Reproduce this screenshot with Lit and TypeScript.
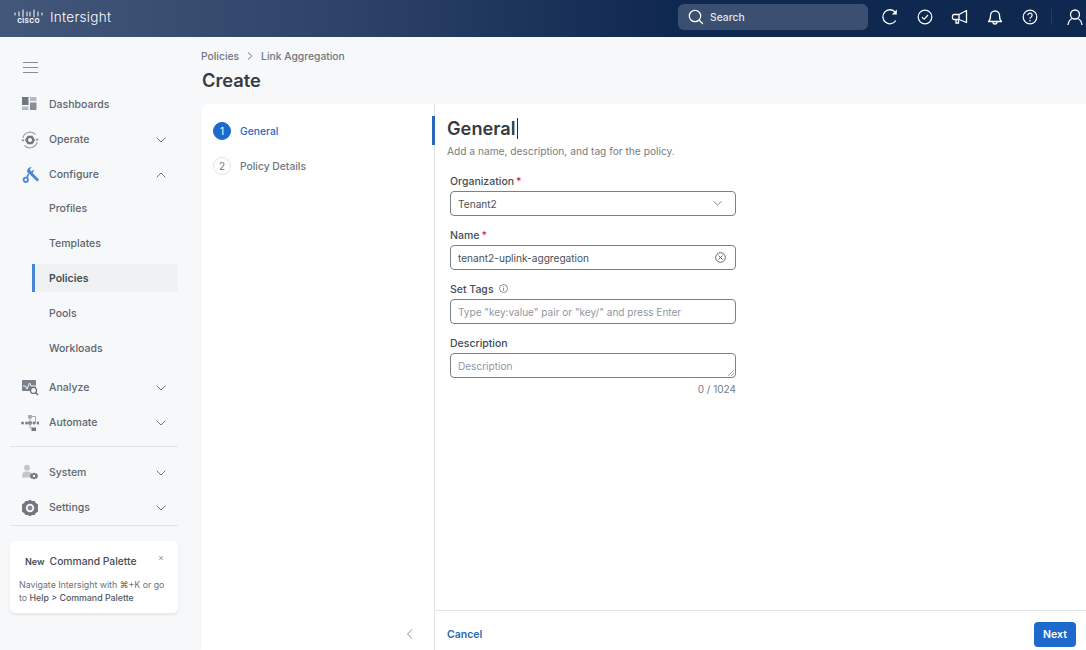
import { LitElement, html, css, svg } from "lit";
import { customElement } from "lit/decorators.js";

const chevDown = html`<svg class="chev" width="10" height="6" viewBox="0 0 10 6"><path d="M.7.7 5 5 9.300.7" fill="none" stroke="#6f7780" stroke-width="1"/></svg>`;
const chevUp = html`<svg class="chev" width="10" height="6" viewBox="0 0 10 6"><path d="M.7 5.300 5 1l4.300 4.300" fill="none" stroke="#6f7780" stroke-width="1"/></svg>`;

const gray = "#79818a";
const gearTeeth = "M9 .8 11.200 2.100 13.600 2 14.800 4.100 17 5.300 16.900 9 17 12.700 14.800 13.900 13.600 16 11.200 15.900 9 17.200 6.800 15.900 4.400 16 3.200 13.900 1 12.700 1.100 9 1 5.300 3.200 4.100 4.400 2 6.800 2.100z";
const icons: Record<string, unknown> = {
  dash: svg`<rect x="1" y="1" width="6.500" height="8" fill="#6f7780"/><rect x="9" y="1" width="6.500" height="4" fill="#b5babf"/><rect x="1" y="10.500" width="6.500" height="3.500" fill="#b5babf"/><rect x="9" y="6.500" width="6.500" height="7.500" fill="#868d95"/>`,
  operate: svg`<path d="M1.800 7A7.500 7.500 0 0 1 14.500 3.500M16.200 11A7.500 7.500 0 0 1 3.500 14.500" fill="none" stroke="#9aa0a6" stroke-width="1.100"/><path d="M.3 8.500h3.400L2 11zM17.700 9.500h-3.400L16 7z" fill="#8a9198"/><path d="M6.500 4.700h5L14 9l-2.500 4.300h-5L4 9z" fill="#6f7780"/><circle cx="9" cy="9" r="2" fill="#f7f8f9"/>`,
  config: svg`<path d="M9.500 7 16.300 13.800" fill="none" stroke="#4a86d8" stroke-width="2.800" stroke-linecap="round"/><path d="M6.200 6.200A4 4 0 0 1 10.800 1.300L8.700 3.400 10.600 5.400 12.800 3.300A4 4 0 0 1 8 8z" fill="#4a86d8"/><path d="M7.500 8 5.800 12" stroke="#4a86d8" stroke-width="1.700"/><circle cx="4.800" cy="13.800" r="2.200" fill="none" stroke="#4a86d8" stroke-width="1.800"/>`,
  analyze: svg`<rect x="1" y="1" width="14" height="11" rx="1" fill="#79818a"/><path d="M2 7h2.500l1.500 3 2.500-6 1.500 3H15" fill="none" stroke="#f7f8f9" stroke-width="1"/><circle cx="12.500" cy="11.500" r="3" fill="#f7f8f9" stroke="#5e666e" stroke-width="1.100"/><path d="M14.700 13.700 17 16" stroke="#5e666e" stroke-width="1.300"/>`,
  automate: svg`<circle cx="1.500" cy="9" r="1.500" fill="${gray}"/><circle cx="5.500" cy="9" r="1.500" fill="${gray}"/><circle cx="9" cy="9" r="2" fill="#6f7780"/><circle cx="13" cy="9" r="1.500" fill="${gray}"/><circle cx="17" cy="9" r="1.500" fill="${gray}"/><rect x="7" y="1" width="4" height="3.500" fill="#a6acb2"/><rect x="10.500" y="13.500" width="4.500" height="3.500" fill="#6f7780"/><path d="M9 4v10h2M11 2.500h3.500V9" fill="none" stroke="#a6acb2"/>`,
  system: svg`<circle cx="6" cy="3.800" r="3" fill="#c3c7cb"/><path d="M1 13.500c0-5 1.500-6 5-6s5 1 5 6z" fill="#c3c7cb"/><path d="M13 8.600l1.400.8 1.600.1.700 1.400v2.200l-.7 1.400-1.600.1-1.400.8-1.400-.8-1.600-.1-.7-1.400v-2.200l.7-1.400 1.600-.1z" fill="#6f7780"/><circle cx="13" cy="12" r="1.200" fill="#f7f8f9"/>`,
  settings: svg`<path d="${gearTeeth}" fill="#6f7780"/><circle cx="9" cy="9" r="4.200" fill="#f7f8f9"/><circle cx="9" cy="9" r="2.400" fill="#868d95"/>`,
};

function navIcon(name: string) {
  return html`<svg class="nav-icon" width="18" height="18" viewBox="0 0 18 18">${icons[name]}</svg>`;
}

@customElement("app-root")
export class AppRoot extends LitElement {
  static styles = css`
    :host {
      display: flex;
      flex-direction: column;
      height: 650px;
      overflow: hidden;
      background: #f7f8f9;
      font-family: Inter, "Liberation Sans", sans-serif;
      color: #5e666e;
      font-size: 11px;
    }
    header {
      height: 37px;
      box-sizing: border-box;
      padding: 0 0 3px 14px;
      flex: none;
      display: flex;
      align-items: center;
      background: linear-gradient(90deg, #42577a 0%, #2f4468 30%, #0f2850 62%, #0f2850 100%);
      color: #fff;
    }
    .brand {
      font-size: 13.500px;
      font-weight: 300;
      margin-left: 7px;
      letter-spacing: .3px;
    }
    .logo { display: flex; flex-direction: column; align-items: center; width: 29px; }
    .logo b { font-size: 6.500px; font-weight: 700; letter-spacing: .4px; line-height: 7px; }
    .search {
      margin-left: auto;
      width: 190px;
      height: 26px;
      box-sizing: border-box;
      border-radius: 6px;
      background: #3b4f70;
      display: flex;
      align-items: center;
      gap: 6px;
      padding-left: 10px;
      font-size: 10.300px;
      font-weight: 500;
      color: #e3e7ec;
    }
    .tools { display: flex; align-items: center; margin-left: 13px; gap: 17px; padding-right: 2px; }
    .tools svg { display: block; }
    .sep { width: 1px; height: 16px; background: #263d63; margin: 0 -3px 0 -5px; }

    .body { flex: 1; display: flex; min-height: 0; }
    nav { width: 201px; flex: none; box-sizing: border-box; padding: 0 23px 0 10px; }
    .burger { display: block; margin: 25px 0 14px 13px; }
    .item {
      display: flex;
      align-items: center;
      height: 35px;
      font-weight: 500;
      font-size: 10.500px;
      position: relative;
    }
    .item .nav-icon { position: absolute; left: 11px; top: 9px; }
    .item span { margin-left: 39px; }
    .chev { position: absolute; left: 146px; top: 15px; }
    .first-sub { margin-top: -1px; }
    .active { height: 28px; margin: 3px 0 4px 22px; background: #f0f1f3; border-radius: 0 3px 3px 0; border-left: 3px solid #4a86d8; color: #454c53; font-weight: 600; }
    .active span { margin-left: 14px; }
    .group-gap { height: 4px; }
    hr { border: 0; border-top: 1px solid #e1e4e7; margin: 6px 0 8px; }
    .promo {
      margin-top: 15px;
      height: 72px;
      box-sizing: border-box;
      background: #fff;
      border-radius: 5px;
      box-shadow: 0 2px 3px rgba(0, 0, 0, .08);
      padding: 14px 9px 0;
      position: relative;
      font-size: 8.800px;
      line-height: 13px;
      color: #6b7279;
    }
    .promo-title { display: flex; gap: 5px; padding-left: 6px; font-size: 10.300px; font-weight: 500; color: #464d54; margin-bottom: 10px; }
    .promo-title b { font-weight: 600; font-size: 9px; }
    .promo strong { font-weight: 500; color: #50575e; }
    .promo .x { position: absolute; right: 14px; top: 11px; font-size: 9px; color: #8d949b; line-height: 11px; }

    main { flex: 1; display: flex; flex-direction: column; min-width: 0; }
    .crumb { display: flex; align-items: center; gap: 8px; margin-top: 12px; height: 13px; font-size: 10.300px; font-weight: 500; color: #6f7780; }
    h1 { margin: 6px 0 0 1px; height: 24px; line-height: 24px; font-size: 18.300px; font-weight: 600; color: #363b41; }
    .card { flex: 1; display: flex; margin-top: 12px; background: #fff; border-radius: 8px 0 0 0; box-shadow: 0 0 2px rgba(0, 0, 0, .04); min-height: 0; }
    .steps { width: 234px; flex: none; box-sizing: border-box; border-right: 1px solid #e1e4e7; padding-top: 9px; position: relative; }
    .step { display: flex; align-items: center; gap: 9px; height: 35px; padding-left: 12px; font-size: 10.300px; font-weight: 500; color: #6f7780; }
    .dot { width: 18px; height: 18px; box-sizing: border-box; border-radius: 50%; display: flex; align-items: center; justify-content: center; font-size: 10px; border: 1.500px solid #e1e4e7; font-weight: 400; }
    .on { color: #1d69cc; }
    .on .dot { background: #1d69cc; border-color: #1d69cc; color: #fff; }
    .steps .mark { position: absolute; right: -1px; top: 12px; width: 3px; height: 29px; background: #2a67b8; }
    .steps .back { position: absolute; right: 21px; bottom: 11px; }
    .pane { flex: 1; display: flex; flex-direction: column; min-width: 0; }
    .form { flex: 1; padding: 13px 0 0 12px; }
    h2 { margin: 0; height: 22px; line-height: 22px; font-size: 18.200px; font-weight: 600; color: #363b41; display: flex; align-items: center; }
    .caret { width: 1px; height: 21px; background: #2b2f34; margin-left: 1px; }
    .sub { margin-top: 5px; height: 14px; line-height: 14px; font-size: 10.200px; color: #767d85; }
    .fields { width: 286px; margin: 14px 0 0 3px; }
    label { display: flex; align-items: center; height: 19px; font-size: 10.500px; font-weight: 500; color: #464d54; }
    label i { color: #c9303a; font-style: normal; margin-left: 2px; }
    label svg { margin-left: 5px; margin-bottom: 3px; }
    .input {
      height: 25px;
      box-sizing: border-box;
      border: 1.500px solid #7a8288;
      border-radius: 4px;
      display: flex;
      align-items: center;
      justify-content: space-between;
      padding: 0 9px 0 7px;
      font-size: 10.150px;
      color: #4a5157;
      margin-bottom: 10px;
      position: relative;
    }
    .ph { color: #90979e; font-size: 10.050px; }
    .grip { position: absolute; right: 1px; bottom: 1px; }
    .count { margin-top: -5px; text-align: right; font-size: 10px; color: #767d85; }
    footer { height: 40px; box-sizing: border-box; flex: none; border-top: 1px solid #e1e4e7; display: flex; align-items: center; justify-content: space-between; padding: 0 10px 0 12px; font-size: 10.500px; font-weight: 600; color: #2a67b8; }
    .next { width: 42px; height: 25px; margin-top: 8px; border-radius: 4px; background: #1d69cc; color: #fff; display: flex; align-items: center; justify-content: center; }
    .cancel { margin-top: 7px; }
  `;

  private navRow(label: string, icon: string, chev?: "up" | "down") {
    return html`<div class="item">${navIcon(icon)}<span>${label}</span>${chev === "up" ? chevUp : chev === "down" ? chevDown : ""}</div>`;
  }

  private sub(label: string, first = false) {
    return html`<div class="item ${first ? "first-sub" : ""}"><span>${label}</span></div>`;
  }

  render() {
    return html`
      <header>
        <div class="logo">
          <svg width="29" height="9" viewBox="0 0 29 9">
            <path d="M1 4v2M5 3v4M9 1v7M13 3v4M16 3v4M20 1v7M24 3v4M28 4v2" stroke="#fff" stroke-width="1" stroke-linecap="round"/>
          </svg>
          <b>CISCO</b>
        </div>
        <div class="brand">Intersight</div>
        <div class="search">
          <svg width="16" height="16" viewBox="0 0 16 16"><circle cx="7" cy="7" r="5.700" fill="none" stroke="#fff" stroke-width="1.200"/><path d="M11 11l4 4" stroke="#fff" stroke-width="1.200"/></svg>
          Search
        </div>
        <div class="tools">
          <svg width="18" height="18" viewBox="0 0 18 18"><path d="M14.800 12.500A7 7 0 1 1 14 4" fill="none" stroke="#fff" stroke-width="1.300"/><path d="M15.800 1.500v5h-5z" fill="#fff"/></svg>
          <svg width="18" height="18" viewBox="0 0 18 18"><circle cx="9" cy="9" r="6.800" fill="none" stroke="#fff" stroke-width="1.200"/><path d="M6 9.200l2.200 2L12 7" fill="none" stroke="#fff" stroke-width="1.200"/></svg>
          <svg width="18" height="18" viewBox="0 0 18 18"><path d="M15.500 2.500v12L8 11.500H3a1.500 1.500 0 0 1-1.500-1.500V8A1.500 1.500 0 0 1 3 6.500h5z" fill="none" stroke="#fff" stroke-width="1.300" stroke-linejoin="round"/><path d="M8 6.500v5M5 11.500V15h2.500v-3.500" fill="none" stroke="#fff" stroke-width="1.300"/></svg>
          <svg width="18" height="18" viewBox="0 0 18 18"><path d="M2.500 13.500c2-1.500 2-3 2-6a4.500 4.500 0 0 1 9 0c0 3 0 4.500 2 6z" fill="none" stroke="#fff" stroke-width="1.300" stroke-linejoin="round"/><path d="M7 14a2 2 0 0 0 4 0" fill="none" stroke="#fff" stroke-width="1.300"/></svg>
          <svg width="18" height="18" viewBox="0 0 18 18"><circle cx="9" cy="9" r="6.800" fill="none" stroke="#fff" stroke-width="1.200"/><path d="M6.900 7.200a2.100 2.100 0 1 1 3.300 1.700c-.8.500-1.200.9-1.200 1.800" fill="none" stroke="#fff" stroke-width="1.200"/><circle cx="9" cy="12.700" r=".8" fill="#fff"/></svg>
          <div class="sep"></div>
          <svg width="18" height="18" viewBox="0 0 18 18"><circle cx="9" cy="6.500" r="4.500" fill="none" stroke="#fff" stroke-width="1.300"/><path d="M2 17c.5-4 3-6 4.500-6.500M16 17c-.5-4-3-6-4.500-6.500" fill="none" stroke="#fff" stroke-width="1.300"/></svg>
        </div>
      </header>
      <div class="body">
        <nav>
          <svg class="burger" width="15" height="11" viewBox="0 0 15 11"><path d="M0 .5h15M0 5.500h15M0 10.500h15" stroke="#868d95" stroke-width="1"/></svg>
          ${this.navRow("Dashboards", "dash")}
          ${this.navRow("Operate", "operate", "down")}
          ${this.navRow("Configure", "config", "up")}
          ${this.sub("Profiles", true)}
          ${this.sub("Templates")}
          <div class="item active"><span>Policies</span></div>
          ${this.sub("Pools")}
          ${this.sub("Workloads")}
          <div class="group-gap"></div>
          ${this.navRow("Analyze", "analyze", "down")}
          ${this.navRow("Automate", "automate", "down")}
          <hr />
          ${this.navRow("System", "system", "down")}
          ${this.navRow("Settings", "settings", "down")}
          <hr style="margin:0" />
          <div class="promo">
            <div class="promo-title"><b>New</b> Command Palette</div>
            <div class="x">×</div>
            Navigate Intersight with ⌘+K or go<br />to <strong>Help &gt; Command Palette</strong>
          </div>
        </nav>
        <main>
          <div class="crumb">
            <span>Policies</span>
            <svg width="6" height="8" viewBox="0 0 6 8"><path d="M1 .5 4.800 4 1 7.500" fill="none" stroke="#6f7780"/></svg>
            <span>Link Aggregation</span>
          </div>
          <h1>Create</h1>
          <div class="card">
            <div class="steps">
              <div class="step on"><div class="dot">1</div>General</div>
              <div class="step"><div class="dot">2</div>Policy Details</div>
              <div class="mark"></div>
              <svg class="back" width="7" height="10" viewBox="0 0 7 10"><path d="M6 .5 1.500 5 6 9.500" fill="none" stroke="#868d95"/></svg>
            </div>
            <div class="pane">
              <div class="form">
                <h2>General<span class="caret"></span></h2>
                <div class="sub">Add a name, description, and tag for the policy.</div>
                <div class="fields">
                  <label>Organization<i>*</i></label>
                  <div class="input"><span>Tenant2</span>
                    <svg width="9" height="5" viewBox="0 0 9 5" style="margin-right:4px"><path d="M.5.500 4.500 4 8.500.500" fill="none" stroke="#868d95"/></svg>
                  </div>
                  <label>Name<i>*</i></label>
                  <div class="input"><span>tenant2-uplink-aggregation</span>
                    <svg width="11" height="11" viewBox="0 0 11 11"><circle cx="5.500" cy="5.500" r="4.800" fill="none" stroke="#5e666e"/><path d="M3.500 3.500l4 4M7.500 3.500l-4 4" stroke="#5e666e"/></svg>
                  </div>
                  <label>Set Tags
                    <svg width="9" height="9" viewBox="0 0 9 9"><circle cx="4.500" cy="4.500" r="4" fill="none" stroke="#6f7780" stroke-width=".8"/><path d="M4.500 4v2.800M4.500 2.200v1" stroke="#6f7780" stroke-width=".8"/></svg>
                  </label>
                  <div class="input"><span class="ph">Type "key:value" pair or "key/" and press Enter</span></div>
                  <label>Description</label>
                  <div class="input"><span class="ph">Description</span>
                    <svg class="grip" width="6" height="6" viewBox="0 0 6 6"><path d="M0 6l6-6M3 6l3-3" stroke="#7a8288" stroke-width=".7"/></svg>
                  </div>
                  <div class="count">0 / 1024</div>
                </div>
              </div>
              <footer>
                <span class="cancel">Cancel</span>
                <div class="next">Next</div>
              </footer>
            </div>
          </div>
        </main>
      </div>
    `;
  }
}
